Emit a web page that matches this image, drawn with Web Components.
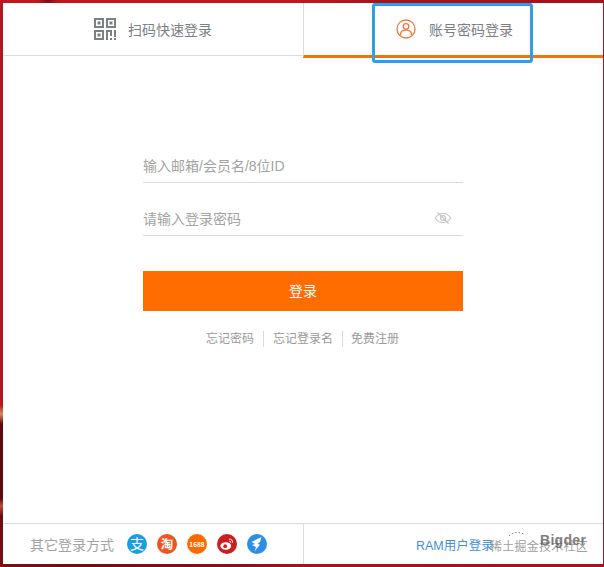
<!DOCTYPE html>
<html lang="zh">
<head>
<meta charset="utf-8">
<title>登录</title>
<style>
    html, body { margin: 0; padding: 0; }
    body { font-family: "Liberation Sans", "Noto Sans CJK SC", sans-serif; }
</style>
</head>
<body>

<template id="loginPageTemplate">
    <style>
        :host {
            display: block;
            position: relative;
            width: 604px;
            height: 567px;
            box-sizing: border-box;
            padding: 3px 1px 3px 3px;
            overflow: hidden;
            background:
                linear-gradient(180deg, #b5161f 0, #b5161f 405px, #d98a5a 414px, #5c0a10 424px, #5c0a10 498px, #c04a40 506px, #6a0d14 516px, #7a1016 567px) left top / 3px 100% no-repeat,
                linear-gradient(90deg, #7a1016 0, #6e0d12 70px, #8a1016 240px, #a8121e 310px, #a8121e 100%) left bottom / 100% 3px no-repeat,
                linear-gradient(90deg, #c4141c 0, #c4141c 38px, #7c0f14 48px, #c4141c 58px, #c4141c 300px, #a8121e 380px, #a8121e 100%) left top / 100% 3px no-repeat,
                #8c1c34;
        }
        .panel {
            display: flex;
            flex-direction: column;
            height: 100%;
            background: #fff;
        }
        .body { flex: 1; }
    </style>
    <div class="panel">
        <slot name="tabs"></slot>
        <div class="body"><slot></slot></div>
        <slot name="footer"></slot>
    </div>
    <slot name="overlay"></slot>
</template>

<template id="loginTabsTemplate">
    <style>
        :host {
            display: grid;
            grid-template-columns: 300px 300px;
            grid-template-rows: 53px;
            height: 53px;
        }
    </style>
    <slot></slot>
</template>

<template id="tabItemTemplate">
    <style>
        :host {
            display: flex;
            align-items: center;
            justify-content: center;
            gap: 12px;
            box-sizing: border-box;
            height: 53px;
            font-size: 14px;
            color: #7b8085;
            border-bottom: 1px solid #dcdcdc;
        }
        :host([active]) {
            height: 55px;
            gap: 13px;
            padding-left: 2px;
            border-left: 1px solid #dcdcdc;
            border-bottom: 3px solid #ee7410;
        }
        ::slotted(svg) { display: block; }
    </style>
    <slot name="icon"></slot>
    <slot></slot>
</template>

<template id="loginFormTemplate">
    <style>
        :host {
            display: flex;
            flex-direction: column;
            width: 320px;
            margin: 0 auto;
            padding-top: 91px;
        }
    </style>
    <slot></slot>
</template>

<template id="textFieldTemplate">
    <style>
        :host {
            display: flex;
            align-items: center;
            justify-content: space-between;
            box-sizing: border-box;
            height: 36px;
            margin-bottom: 17px;
            border-bottom: 1px solid #d9d9d9;
            font-size: 14px;
            color: #a3a3a3;
        }
        ::slotted(svg) { display: block; margin-right: 11px; }
    </style>
    <slot></slot>
    <slot name="icon"></slot>
</template>

<template id="loginButtonTemplate">
    <style>
        :host {
            display: flex;
            align-items: center;
            justify-content: center;
            box-sizing: border-box;
            height: 40px;
            margin-top: 18px;
            padding-bottom: 2px;
            background: #ff6d00;
            color: #fff;
            font-size: 14px;
        }
    </style>
    <slot></slot>
</template>

<template id="linkRowTemplate">
    <style>
        :host {
            display: flex;
            justify-content: center;
            align-items: center;
            margin-top: 20px;
            height: 16px;
            font-size: 12px;
            color: #9a9a9a;
        }
        ::slotted(span) { padding: 0 9px; line-height: 16px; }
        ::slotted(span:not(:last-child)) { border-right: 1px solid #d9d9d9; }
        ::slotted(span:last-child) { margin-left: -1px; margin-right: 1px; }
    </style>
    <slot></slot>
</template>

<template id="loginFooterTemplate">
    <style>
        :host {
            display: grid;
            grid-template-columns: 300px 300px;
            height: 41px;
            box-sizing: border-box;
            border-top: 1px solid #dcdcdc;
        }
        .left {
            display: flex;
            align-items: center;
            padding-left: 27px;
            font-size: 14px;
            color: #a3a3a3;
        }
        .icons { display: flex; gap: 10px; margin-left: 13px; }
        .right {
            display: flex;
            align-items: center;
            padding-left: 112px;
            border-left: 1px solid #dcdcdc;
            font-size: 12.5px;
            color: #3f8fdc;
        }
    </style>
    <div class="left">
        <slot name="label"></slot>
        <div class="icons"><slot name="icons"></slot></div>
    </div>
    <div class="right"><slot name="link"></slot></div>
</template>

<template id="noteBoxTemplate">
    <style>
        :host {
            position: absolute;
            left: 372px;
            top: 3px;
            width: 161px;
            height: 60px;
            box-sizing: border-box;
            border: 3px solid #2d9fe8;
            border-radius: 3px;
        }
    </style>
</template>

<template id="waterMarkTemplate">
    <style>
        :host {
            position: absolute;
            left: 490px;
            top: 531px;
            width: 100px;
            height: 24px;
            color: #8f8f8f;
            white-space: nowrap;
        }
        svg { position: absolute; left: 18px; top: 0; }
        .cn {
            position: absolute;
            left: 0;
            top: 6px;
            font-size: 12px;
            letter-spacing: .25px;
            opacity: .85;
        }
        .en {
            position: absolute;
            left: 50px;
            top: 1px;
            font-size: 14px;
            font-weight: 700;
            letter-spacing: .3px;
            color: #555;
            opacity: .75;
        }
    </style>
    <svg width="18" height="6" viewBox="0 0 18 6" fill="none" stroke="#8a8a8a" stroke-width="1" stroke-dasharray="1.500 2">
        <path d="M1 5C5 1 12 0 17 4"/>
    </svg>
    <span class="cn"><slot name="cn"></slot></span>
    <span class="en"><slot name="en"></slot></span>
</template>

<login-page>
    <login-tabs slot="tabs">
        <tab-item>
            <svg slot="icon" width="22" height="22" viewBox="0 0 22 22" fill="none" stroke="#7b8085" stroke-width="2">
                <rect x="1" y="1" width="8" height="8"/>
                <rect x="13" y="1" width="8" height="8"/>
                <rect x="1" y="13" width="8" height="8"/>
                <path d="M3.500 3.500h3v3h-3zM15.500 3.500h3v3h-3zM3.500 15.500h3v3h-3zM16 20h2v2h-2zM20 20h2v2h-2z" fill="#7b8085" stroke="none"/>
                <path d="M13 22V13h4v5M21 12v6h1"/>
            </svg>
            扫码快速登录
        </tab-item>
        <tab-item active>
            <svg slot="icon" width="20" height="20" viewBox="0 0 20 20" fill="none" stroke="#ee7a3c" stroke-width="1.300">
                <circle cx="10" cy="10" r="9"/>
                <circle cx="10" cy="7.400" r="2.800"/>
                <path d="M4.600 16.600v-1.400c0-2.600 2-4 5.400-4s5.400 1.400 5.400 4v1.400"/>
            </svg>
            账号密码登录
        </tab-item>
    </login-tabs>

    <login-form>
        <text-field>输入邮箱/会员名/8位ID</text-field>
        <text-field>
            请输入登录密码
            <svg slot="icon" width="18" height="14" viewBox="0 0 18 14" fill="none" stroke="#c4c4c4" stroke-width="1.100">
                <path d="M1 7c2.200-3 4.900-4.500 8-4.500S14.800 4 17 7c-2.200 3-4.900 4.500-8 4.500S3.200 10 1 7z"/>
                <circle cx="9" cy="7" r="2.400"/>
                <path d="M3.500 1.500l11 11"/>
            </svg>
        </text-field>
        <login-button>登录</login-button>
        <link-row>
            <span>忘记密码</span><span>忘记登录名</span><span>免费注册</span>
        </link-row>
    </login-form>

    <login-footer slot="footer">
        <span slot="label">其它登录方式</span>
        <brand-icon slot="icons" kind="alipay"></brand-icon>
        <brand-icon slot="icons" kind="taobao"></brand-icon>
        <brand-icon slot="icons" kind="ali1688"></brand-icon>
        <brand-icon slot="icons" kind="weibo"></brand-icon>
        <brand-icon slot="icons" kind="dingtalk"></brand-icon>
        <span slot="link">RAM用户登录</span>
    </login-footer>

    <note-box slot="overlay"></note-box>
    <water-mark slot="overlay">
        <span slot="cn">稀土掘金技术社区</span>
        <span slot="en">Bigder</span>
    </water-mark>
</login-page>

<script>
    (function loginScreen(customElements) {
        'use strict';

        // every plain element just clones its own template
        function plain(name, templateId) {
            customElements.define(name, class extends HTMLElement {
                constructor() {
                    super();
                    const shadowRoot = this.attachShadow({ mode: 'open' });
                    const templ = document.querySelector('#' + templateId);
                    shadowRoot.appendChild(document.importNode(templ.content, true));
                }
            });
        }

        plain('login-page', 'loginPageTemplate');
        plain('login-tabs', 'loginTabsTemplate');
        plain('tab-item', 'tabItemTemplate');
        plain('login-form', 'loginFormTemplate');
        plain('text-field', 'textFieldTemplate');
        plain('login-button', 'loginButtonTemplate');
        plain('link-row', 'linkRowTemplate');
        plain('login-footer', 'loginFooterTemplate');
        plain('note-box', 'noteBoxTemplate');
        plain('water-mark', 'waterMarkTemplate');

        const glyphs = {
            alipay: '<circle cx="10" cy="10" r="10" fill="#1a9ee2"/>' +
                '<text x="10" y="15" font-size="14" text-anchor="middle" fill="#fff">支</text>',
            taobao: '<circle cx="10" cy="10" r="10" fill="#f4511e"/>' +
                '<text x="10" y="14.500" font-size="12.500" font-weight="700" text-anchor="middle" fill="#fff">淘</text>',
            ali1688: '<circle cx="10" cy="10" r="10" fill="#ff6a00"/>' +
                '<text x="10" y="12.500" font-size="6.500" font-weight="700" text-anchor="middle" fill="#fff">1688</text>',
            weibo: '<circle cx="10" cy="10" r="10" fill="#c9201f"/>' +
                '<ellipse cx="8.800" cy="12" rx="5.400" ry="3.800" fill="#fff"/>' +
                '<circle cx="8.200" cy="12.200" r="1.900" fill="#c9201f"/>' +
                '<path d="M12 5.300c2.400-.6 4 1.200 3.400 3.500M12.300 7.300c1.100-.3 1.600.4 1.300 1.300" fill="none" stroke="#fff" stroke-width="1"/>',
            dingtalk: '<circle cx="10" cy="10" r="10" fill="#2b8fe8"/>' +
                '<path d="M14.500 3L4.500 8l3.500 2-3 1 4 2-1.500 4.500L13 10.500 10.500 10l2.500-2z" fill="#fff"/>'
        };

        class BrandIcon extends HTMLElement {

            constructor() {
                super();
                this.attachShadow({ mode: 'open' });
            }

            connectedCallback() {
                const kind = this.getAttribute('kind');
                this.shadowRoot.innerHTML =
                    '<style>:host { display: block; width: 20px; height: 20px; } svg { display: block; }' +
                    'text { font-family: "Noto Sans CJK SC", sans-serif; }</style>' +
                    '<svg width="20" height="20" viewBox="0 0 20 20">' + glyphs[kind] + '</svg>';
            }

        }

        customElements.define('brand-icon', BrandIcon);

    })(window.customElements);
</script>
</body>
</html>
